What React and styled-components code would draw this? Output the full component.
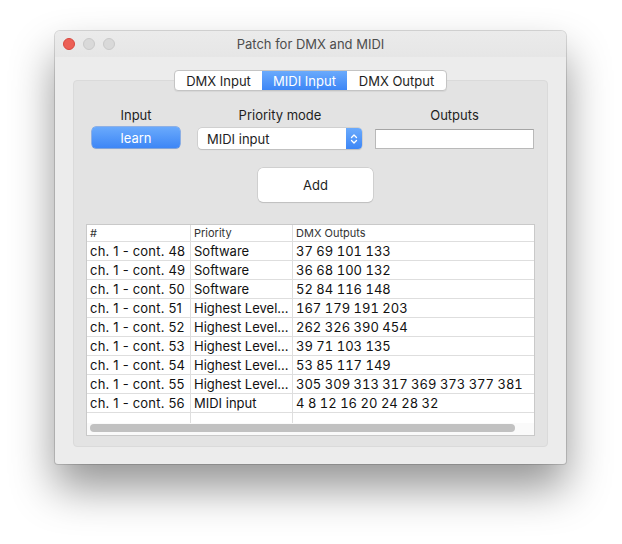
import React from 'react';
import styled, { createGlobalStyle } from 'styled-components';

const GlobalStyle = createGlobalStyle`
  html, body {
    margin: 0;
    padding: 0;
    background: #ffffff;
  }
  body {
    font-family: Inter, Roboto, "Liberation Sans", sans-serif;
    -webkit-font-smoothing: antialiased;
  }
`;

const rows = [
  ['ch. 1 - cont. 48', 'Software', '37 69 101 133'],
  ['ch. 1 - cont. 49', 'Software', '36 68 100 132'],
  ['ch. 1 - cont. 50', 'Software', '52 84 116 148'],
  ['ch. 1 - cont. 51', 'Highest Level...', '167 179 191 203'],
  ['ch. 1 - cont. 52', 'Highest Level...', '262 326 390 454'],
  ['ch. 1 - cont. 53', 'Highest Level...', '39 71 103 135'],
  ['ch. 1 - cont. 54', 'Highest Level...', '53 85 117 149'],
  ['ch. 1 - cont. 55', 'Highest Level...', '305 309 313 317 369 373 377 381'],
  ['ch. 1 - cont. 56', 'MIDI input', '4 8 12 16 20 24 28 32'],
];

const Page = styled.div`
  padding: 31px 0 0 55px;
  height: 544px;
  box-sizing: border-box;
`;

const Window = styled.div`
  width: 511px;
  height: 433px;
  box-sizing: border-box;
  background: #ececec;
  border-radius: 5px 5px 3px 3px;
  box-shadow: 0 0 0 1px rgba(0, 0, 0, 0.14), 0 24px 44px rgba(0, 0, 0, 0.42);
  display: flex;
  flex-direction: column;
`;

const TitleBar = styled.div`
  height: 26px;
  flex-shrink: 0;
  display: flex;
  align-items: center;
  padding-left: 8px;
  position: relative;
  border-radius: 5px 5px 0 0;
  background: linear-gradient(#ebebeb, #e6e6e6);
`;

const Light = styled.span`
  width: 12px;
  height: 12px;
  border-radius: 50%;
  margin-right: 8px;
  box-sizing: border-box;
  background: ${(p) => (p.$close ? '#ec5f55' : '#d9d9d9')};
  border: 1px solid ${(p) => (p.$close ? '#d8473e' : '#c9c9c9')};
`;

const Title = styled.div`
  position: absolute;
  left: 0;
  right: 0;
  text-align: center;
  font-size: 13px;
  color: #4d4d4d;
  pointer-events: none;
`;

const Body = styled.div`
  flex: 1;
  padding: 23px 18px 17px;
  display: flex;
`;

const TabBox = styled.div`
  flex: 1;
  background: #e3e3e3;
  border: 1px solid #dadada;
  border-radius: 4px;
  padding: 0 12px 10px;
  display: flex;
  flex-direction: column;
`;

const TabBar = styled.div`
  align-self: center;
  margin-top: -11px;
  display: flex;
  height: 21px;
  background: #fff;
  border: 1px solid #c4c4c4;
  border-radius: 4px;
  box-sizing: border-box;
  box-shadow: 0 1px 1px rgba(0, 0, 0, 0.06);
  overflow: hidden;
`;

const Tab = styled.div`
  width: ${(p) => p.$w}px;
  display: flex;
  align-items: center;
  justify-content: center;
  font-size: 13px;
  color: ${(p) => (p.$active ? '#fff' : '#1e1e1e')};
  background: ${(p) => (p.$active ? 'linear-gradient(#6aaafc, #3d86f6)' : 'transparent')};
`;

const Controls = styled.div`
  display: grid;
  grid-template-columns: 100px 164px 159px;
  column-gap: 12px;
  margin-top: 15px;
  & > :nth-child(3) {
    margin-left: 2px;
  }
`;

const Field = styled.div`
  display: flex;
  flex-direction: column;
  align-items: center;
`;

const Label = styled.div`
  font-size: 13px;
  color: #1e1e1e;
  height: 18px;
  line-height: 18px;
  margin-bottom: ${(p) => p.$mb || 0}px;
`;

const LearnButton = styled.div`
  width: 88px;
  height: 21px;
  border-radius: 4px;
  background: linear-gradient(#6aaafc, #3d86f6);
  box-shadow: 0 0 0 0.5px #3b7fe8, 0 1px 1px rgba(0, 0, 0, 0.12);
  color: #fff;
  font-size: 13px;
  display: flex;
  align-items: center;
  justify-content: center;
`;

const Select = styled.div`
  width: 164px;
  height: 21px;
  box-sizing: border-box;
  border-radius: 4px;
  background: #fff;
  box-shadow: 0 0 0 0.5px #bdbdbd, 0 1px 1px rgba(0, 0, 0, 0.15);
  display: flex;
  align-items: center;
  overflow: hidden;
  margin-top: 1px;
`;

const SelectText = styled.span`
  flex: 1;
  padding-left: 9px;
  font-size: 13px;
  color: #1e1e1e;
`;

const SelectArrow = styled.span`
  width: 16px;
  height: 100%;
  background: linear-gradient(#6aaafc, #3d86f6);
  display: flex;
  align-items: center;
  justify-content: center;
`;

const TextInput = styled.div`
  width: 159px;
  height: 20px;
  box-sizing: border-box;
  background: #fff;
  border: 1px solid #b9b9b9;
  border-top-color: #a5a5a5;
  margin-top: 5px;
`;

const AddButton = styled.div`
  align-self: center;
  margin: 19px 0 0 10px;
  width: 115px;
  height: 34px;
  box-sizing: border-box;
  background: #fff;
  border-radius: 5px;
  box-shadow: 0 0 0 0.5px #bdbdbd, 0 1px 1px rgba(0, 0, 0, 0.15);
  display: flex;
  align-items: center;
  justify-content: center;
  font-size: 13px;
  color: #1e1e1e;
`;

const Table = styled.div`
  margin-top: 22px;
  flex: 1;
  background: #fff;
  border: 1px solid #c9c9c9;
  display: flex;
  flex-direction: column;
  overflow: hidden;
`;

const Row = styled.div`
  display: grid;
  grid-template-columns: 103px 102px 1fr;
  height: ${(p) => p.$h || 19}px;
  box-sizing: border-box;
  border-bottom: ${(p) => (p.$noLine ? 'none' : '1px solid #dedede')};
  flex-shrink: 0;
`;

const Cell = styled.div`
  padding-left: 3px;
  border-left: ${(p) => (p.$first ? 'none' : '1px solid #dedede')};
  font-size: ${(p) => (p.$header ? 11 : 13)}px;
  color: ${(p) => (p.$header ? '#333' : '#111')};
  font-variant-numeric: ${(p) => (p.$tab ? 'tabular-nums' : 'normal')};
  letter-spacing: ${(p) => p.$ls || 0}px;
  white-space: nowrap;
  overflow: hidden;
  display: flex;
  align-items: center;
`;

const ScrollTrack = styled.div`
  flex: 1;
  padding: 1px 19px 0 3px;
  background: #fafafa;
`;

const ScrollThumb = styled.div`
  height: 8px;
  border-radius: 4px;
  background: #c1c1c1;
`;

function Chevrons() {
  return (
    <svg width="8" height="12" viewBox="0 0 8 12" fill="none">
      <path d="M1.5 4.5 L4 2 L6.5 4.5" stroke="#fff" strokeWidth="1.3" strokeLinecap="round" strokeLinejoin="round" />
      <path d="M1.5 7.5 L4 10 L6.5 7.5" stroke="#fff" strokeWidth="1.3" strokeLinecap="round" strokeLinejoin="round" />
    </svg>
  );
}

export default function App() {
  return (
    <>
      <GlobalStyle />
      <Page>
        <Window>
          <TitleBar>
            <Light $close />
            <Light />
            <Light />
            <Title>Patch for DMX and MIDI</Title>
          </TitleBar>
          <Body>
            <TabBox>
              <TabBar>
                <Tab $w={87}>DMX Input</Tab>
                <Tab $w={85} $active>MIDI Input</Tab>
                <Tab $w={99}>DMX Output</Tab>
              </TabBar>
              <Controls>
                <Field>
                  <Label $mb={3}>Input</Label>
                  <LearnButton>learn</LearnButton>
                </Field>
                <Field>
                  <Label $mb={3}>Priority mode</Label>
                  <Select>
                    <SelectText>MIDI input</SelectText>
                    <SelectArrow>
                      <Chevrons />
                    </SelectArrow>
                  </Select>
                </Field>
                <Field>
                  <Label>Outputs</Label>
                  <TextInput />
                </Field>
              </Controls>
              <AddButton>Add</AddButton>
              <Table>
                <Row $h={17}>
                  <Cell $header $first>#</Cell>
                  <Cell $header>Priority</Cell>
                  <Cell $header>DMX Outputs</Cell>
                </Row>
                {rows.map((r) => (
                  <Row key={r[0]}>
                    <Cell $first $ls={0.2}>{r[0]}</Cell>
                    <Cell>{r[1]}</Cell>
                    <Cell $tab>{r[2]}</Cell>
                  </Row>
                ))}
                <Row $h={10} $noLine>
                  <Cell $first />
                  <Cell />
                  <Cell />
                </Row>
                <ScrollTrack>
                  <ScrollThumb />
                </ScrollTrack>
              </Table>
            </TabBox>
          </Body>
        </Window>
      </Page>
    </>
  );
}
